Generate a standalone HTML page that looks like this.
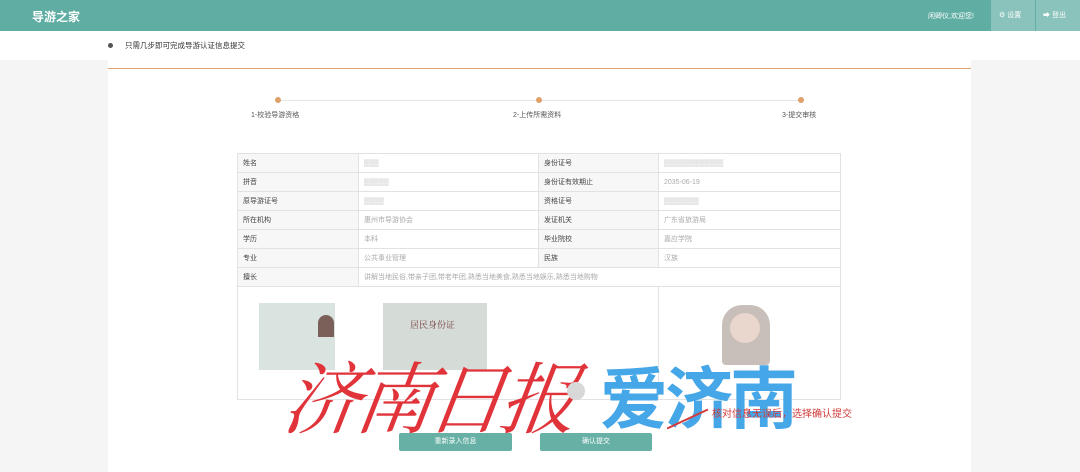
<!DOCTYPE html>
<html><head><meta charset="utf-8"><style>
*{margin:0;padding:0;box-sizing:border-box}
body{width:1080px;height:472px;overflow:hidden;background:#f5f5f5;font-family:"Liberation Sans","Noto Sans CJK SC",sans-serif;font-size:8px;color:#555;position:relative}
.a{position:absolute}
.hd{left:0;top:0;width:1080px;height:31px;background:#5fada3}
.t td{border:1px solid #e2e2e2;height:19px;padding-left:5px;font-size:7px}
.t td.l{background:#f7f7f7;color:#444}
.t td.v{color:#aaa}
.btn{background:#67b0a6;color:#fff;font-size:7px;text-align:center;line-height:18px;border-radius:2px;height:18px}
.dot{width:6px;height:6px;border-radius:3px;background:#e0a06a}
</style></head><body>
<div class="a hd"></div>
<div class="a" style="left:32px;top:8px;color:#fff;font-size:12px;font-weight:bold">导游之家</div>
<div class="a" style="left:928px;top:11px;color:#fff;font-size:7px">闲卿仪,欢迎您!</div>
<div class="a" style="left:991px;top:0;width:44px;height:31px;background:#8ac3bb;color:#fff;font-size:7px;line-height:31px;padding-left:8px">⚙ 设置</div>
<div class="a" style="left:1036px;top:0;width:44px;height:31px;background:#8ac3bb;color:#fff;font-size:7px;line-height:31px;padding-left:7px">➡ 登出</div>
<div class="a" style="left:0;top:31px;width:1080px;height:29px;background:#fff"></div>
<div class="a" style="left:108px;top:43px;width:5px;height:5px;border-radius:3px;background:#555"></div>
<div class="a" style="left:125px;top:40px;font-size:7.5px;color:#333">只需几步即可完成导游认证信息提交</div>
<div class="a" style="left:108px;top:60px;width:863px;height:412px;background:#fff"></div>
<div class="a" style="left:108px;top:68px;width:863px;height:1px;background:#e0a06a"></div>
<div class="a" style="left:278px;top:100px;width:523px;height:1px;background:#e6e6e6"></div>
<div class="a dot" style="left:275px;top:97px"></div>
<div class="a dot" style="left:536px;top:97px"></div>
<div class="a dot" style="left:798px;top:97px"></div>
<div class="a" style="left:251px;top:110px;font-size:7px">1-校验导游资格</div>
<div class="a" style="left:513px;top:110px;font-size:7px">2-上传所需资料</div>
<div class="a" style="left:782px;top:110px;font-size:7px">3-提交审核</div>
<table class="a t" style="left:237px;top:153px;width:604px;border-collapse:collapse">
<tr><td class="l" style="width:121px">姓名</td><td class="v" style="width:180px">▒▒▒</td><td class="l" style="width:120px">身份证号</td><td class="v">▒▒▒▒▒▒▒▒▒▒▒▒</td></tr>
<tr><td class="l">拼音</td><td class="v">▒▒▒▒▒</td><td class="l">身份证有效期止</td><td class="v">2035-06-19</td></tr>
<tr><td class="l">原导游证号</td><td class="v">▒▒▒▒</td><td class="l">资格证号</td><td class="v">▒▒▒▒▒▒▒</td></tr>
<tr><td class="l">所在机构</td><td class="v">惠州市导游协会</td><td class="l">发证机关</td><td class="v">广东省旅游局</td></tr>
<tr><td class="l">学历</td><td class="v">本科</td><td class="l">毕业院校</td><td class="v">嘉应学院</td></tr>
<tr><td class="l">专业</td><td class="v">公共事业管理</td><td class="l">民族</td><td class="v">汉族</td></tr>
<tr><td class="l">擅长</td><td class="v" colspan="3">讲解当地民俗,带亲子团,带老年团,熟悉当地美食,熟悉当地娱乐,熟悉当地购物</td></tr>
</table>
<div class="a" style="left:237px;top:286px;width:604px;height:114px;border:1px solid #e2e2e2;border-top:none"></div>
<div class="a" style="left:658px;top:286px;width:1px;height:114px;background:#e2e2e2"></div>
<div class="a" style="left:259px;top:303px;width:76px;height:67px;background:#d9e3df"></div>
<div class="a" style="left:318px;top:315px;width:16px;height:22px;background:#7a6058;border-radius:8px 8px 0 0"></div>
<div class="a" style="left:383px;top:303px;width:104px;height:67px;background:#d5dcd8"></div>
<div class="a" style="left:410px;top:318px;font-size:9px;color:#7a4040;font-family:'Noto Serif CJK SC',serif">居民身份证</div>
<div class="a" style="left:722px;top:305px;width:48px;height:60px;background:#c9bfba;border-radius:20px 20px 4px 4px"></div>
<div class="a" style="left:730px;top:313px;width:30px;height:30px;background:#e9d6cc;border-radius:15px"></div>
<div class="a" style="left:285px;top:338px;font-size:78px;color:#e0333a;font-family:'Noto Serif CJK SC',serif;font-style:italic;letter-spacing:-6px;transform:skewX(-8deg)">济南日报</div>
<div class="a" style="left:567px;top:382px;width:18px;height:18px;border-radius:9px;background:#d8d8d8"></div>
<div class="a" style="left:600px;top:344px;font-size:68px;color:#45a6e8;font-weight:bold;font-family:'Noto Sans CJK SC',sans-serif;letter-spacing:-3px">爱济南</div>
<div class="a" style="left:712px;top:405px;font-size:10px;color:#d23a3a">核对信息无误后，选择确认提交</div>
<div class="a" style="left:665px;top:418px;width:45px;height:2px;background:#d23a3a;transform:rotate(-25deg)"></div>
<div class="a btn" style="left:399px;top:433px;width:113px">重新录入信息</div>
<div class="a btn" style="left:540px;top:433px;width:112px">确认提交</div>
</body></html>
